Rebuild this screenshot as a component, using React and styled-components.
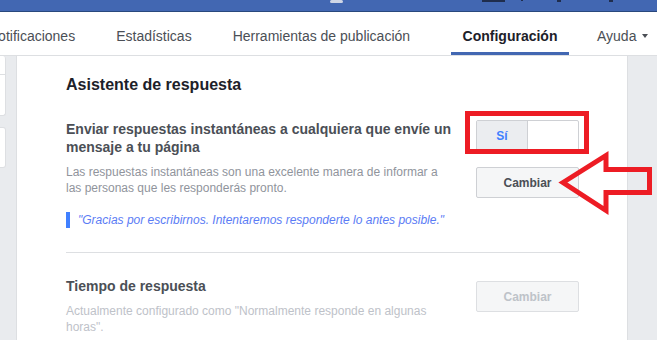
import React from "react";
import styled, { createGlobalStyle, css } from "styled-components";

const Global = createGlobalStyle`
  html, body { margin: 0; padding: 0; background: #e9ebee; }
  body { font-family: "Liberation Sans", Arial, Helvetica, sans-serif; }
  * { box-sizing: border-box; }
`;

const Page = styled.div`
  position: relative;
  width: 657px;
  height: 340px;
  overflow: hidden;
  background: #e9ebee;
  display: flex;
  flex-direction: column;
`;

const TopBar = styled.div`
  flex: none;
  height: 12px;
  background: #4267b2;
  border-bottom: 1px solid #29487d;
  display: flex;
  align-items: flex-start;
  padding-left: 330px;
`;

const TopBit = styled.span`
  flex: none;
  width: ${(p) => p.$w}px;
  height: ${(p) => p.$h}px;
  margin-left: ${(p) => p.$ml}px;
  background: ${(p) => p.$c};
  border-radius: ${(p) => p.$r || 0}px;
`;

const Nav = styled.nav`
  flex: none;
  height: 44px;
  margin-left: -32.5px;
  background: #fff;
  border-bottom: 1px solid #dddfe2;
  display: flex;
`;

const NavItem = styled.div`
  display: flex;
  align-items: center;
  padding: 4px 20.5px 0;
  font-size: 14px;
  color: #4b4f56;
  white-space: nowrap;
  ${(p) =>
    p.$active &&
    css`
      margin: 0 7px 0 20px;
      padding: 4px 12px 0;
      font-weight: bold;
      color: #1d2129;
      box-shadow: inset 0 -3px 0 #4267b2;
    `}
`;

const Caret = styled.span`
  width: 0;
  height: 0;
  margin-left: 6px;
  margin-top: 1px;
  border-left: 3px solid transparent;
  border-right: 3px solid transparent;
  border-top: 4px solid #4b4f56;
`;

const Body = styled.div`
  flex: 1;
  display: flex;
  min-height: 0;
`;

const Sidebar = styled.div`
  flex: none;
  width: 16px;
  display: flex;
  flex-direction: column;
  gap: 11px;
`;

const SideCard = styled.div`
  width: 6px;
  height: ${(p) => p.$h}px;
  background: #fff;
  border: 1px solid #dddfe2;
  border-left: none;
  border-top: ${(p) => (p.$open ? "none" : "1px solid #dddfe2")};
  border-radius: 0 3px 3px 0;
  display: flex;
  flex-direction: column;
`;

const SideRow = styled.div`
  height: 19px;
  border-bottom: 1px solid #dddfe2;
`;

const Panel = styled.main`
  flex: none;
  width: 612px;
  background: #fff;
  border-left: 1px solid #dddfe2;
  border-right: 1px solid #dddfe2;
  padding: 19px 47px 0 49px;
`;

const Heading = styled.h2`
  margin: 0 0 25px;
  font-size: 16px;
  line-height: 20px;
  font-weight: bold;
  color: #1d2129;
`;

const Row = styled.div`
  display: flex;
  justify-content: space-between;
  align-items: flex-start;
`;

const RowText = styled.div`
  width: 390px;
`;

const RowTitle = styled.div`
  font-size: 14px;
  line-height: 18px;
  font-weight: bold;
  color: #4b4f56;
`;

const RowDesc = styled.div`
  margin-top: 8px;
  font-size: 12px;
  line-height: 16px;
  color: ${(p) => (p.$muted ? "#bec2c9" : "#90949c")};
`;

const Quote = styled.div`
  margin-top: 16px;
  border-left: 4px solid #4080ff;
  padding-left: 8px;
  font-size: 12px;
  line-height: 16px;
  font-style: italic;
  color: #5b7cf5;
  white-space: nowrap;
`;

const Actions = styled.div`
  flex: none;
  width: 103px;
  margin-right: 1px;
  padding-top: ${(p) => p.$offset || 0}px;
  display: flex;
  flex-direction: column;
  gap: 16px;
`;

const Toggle = styled.div`
  position: relative;
  height: 31px;
  display: flex;
  border: 1px solid #ced0d4;
  border-radius: 2px;
  background: #fff;
`;

const Segment = styled.div`
  width: 51px;
  display: flex;
  align-items: center;
  justify-content: center;
  background: #ebedf0;
  border-right: 1px solid #ced0d4;
  font-size: 12px;
  font-weight: bold;
  color: #4080ff;
`;

const Highlight = styled.span`
  position: absolute;
  left: -12px;
  top: -10px;
  width: 124px;
  height: 43px;
  border: 5px solid #ed1c24;
  pointer-events: none;
`;

const Button = styled.button`
  height: 31px;
  width: 103px;
  padding: 0;
  border: 1px solid ${(p) => (p.disabled ? "#dddfe2" : "#ced0d4")};
  border-radius: 2px;
  background: #f5f6f7;
  font-family: inherit;
  font-size: 12px;
  font-weight: bold;
  color: ${(p) => (p.disabled ? "#bec3c9" : "#4b4f56")};
`;

const Divider = styled.div`
  height: 1px;
  margin: 24px 0 24px;
  background: #dddfe2;
`;

const ArrowLayer = styled.svg`
  position: absolute;
  left: 0;
  top: 0;
  pointer-events: none;
`;

export default function App() {
  return (
    <Page>
      <Global />
      <TopBar>
        <TopBit $w={13} $h={3} $ml={0} $c="#cfd6e6" $r={6} />
        <TopBit $w={23} $h={2} $ml={139} $c="#1f2d4d" />
        <TopBit $w={2} $h={1} $ml={16} $c="#1f2d4d" />
        <TopBit $w={4} $h={2} $ml={34} $c="#1f2d4d" />
        <TopBit $w={4} $h={2} $ml={48} $c="#1f2d4d" />
      </TopBar>
      <Nav>
        <NavItem>Notificaciones</NavItem>
        <NavItem>Estadísticas</NavItem>
        <NavItem>Herramientas de publicación</NavItem>
        <NavItem $active>Configuración</NavItem>
        <NavItem>
          Ayuda
          <Caret />
        </NavItem>
      </Nav>
      <Body>
        <Sidebar>
          <SideCard $h={60} $open>
            <SideRow />
          </SideCard>
          <SideCard $h={41} />
        </Sidebar>
        <Panel>
          <Heading>Asistente de respuesta</Heading>
          <Row>
            <RowText>
              <RowTitle>
                Enviar respuestas instantáneas a cualquiera que envíe un mensaje a tu página
              </RowTitle>
              <RowDesc>
                Las respuestas instantáneas son una excelente manera de informar a las
                personas que les responderás pronto.
              </RowDesc>
              <Quote>
                "Gracias por escribirnos. Intentaremos responderte lo antes posible."
              </Quote>
            </RowText>
            <Actions>
              <Toggle>
                <Segment>Sí</Segment>
                <Highlight />
              </Toggle>
              <Button>Cambiar</Button>
            </Actions>
          </Row>
          <Divider />
          <Row>
            <RowText>
              <RowTitle>Tiempo de respuesta</RowTitle>
              <RowDesc $muted>
                Actualmente configurado como "Normalmente responde en algunas horas".
              </RowDesc>
            </RowText>
            <Actions $offset={4}>
              <Button disabled>Cambiar</Button>
            </Actions>
          </Row>
        </Panel>
      </Body>
      <ArrowLayer width="657" height="340" viewBox="0 0 657 340">
        <polygon
          points="563,182.5 606,155.5 606,169.5 649.5,169.5 649.5,192.5 606,192.5 606,210.5"
          fill="none"
          stroke="#ed1c24"
          strokeWidth="5"
          strokeLinejoin="miter"
        />
      </ArrowLayer>
    </Page>
  );
}
